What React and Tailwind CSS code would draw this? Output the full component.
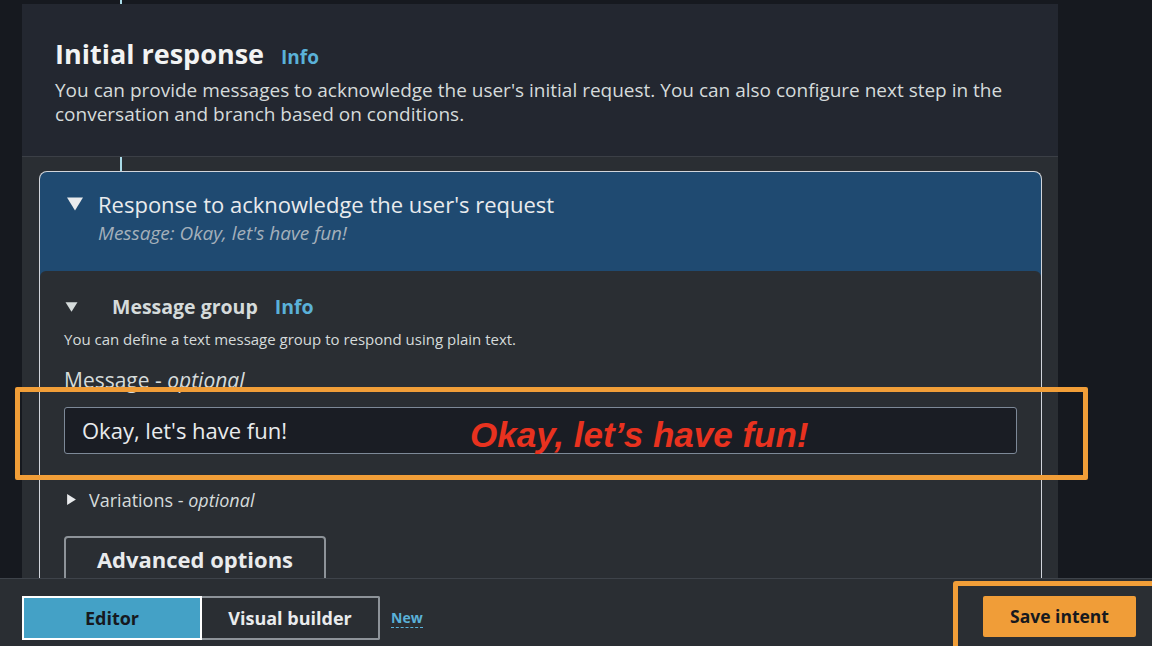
import React from "react";

const Caret = ({ dir = "down", className = "" }) => (
  <svg viewBox="0 0 10 10" className={className} fill="currentColor">
    {dir === "down" ? <polygon points="0,1 10,1 5,9" /> : <polygon points="1,0 9,5 1,10" />}
  </svg>
);

const App = () => {
  return (
    <div className="relative flex h-[646px] w-[1152px] flex-col overflow-hidden bg-[#16191f] font-['Open_Sans',sans-serif] text-[#e9ebed]">
      {/* main scrolling area */}
      <div className="flex-1 overflow-hidden">
        <div className="h-[4px] pl-[120px]">
          <div className="h-full w-[2px] bg-[#a9dbe8]" />
        </div>
        <div className="ml-[22px] w-[1036px]">
          {/* header */}
          <div className="border-b border-[#3b3f46] bg-[#232730] pb-[30px] pl-[33px] pr-[40px] pt-[34px]">
            <div className="flex items-baseline gap-[17px]">
              <h1 className="text-[27px] font-bold leading-[32px] text-[#f2f3f3]">Initial response</h1>
              <span className="text-[19px] font-bold text-[#5ab1d8]">Info</span>
            </div>
            <p className="mt-[6px] text-[19px] leading-[24px] text-[#d5dbdb]">
              You can provide messages to acknowledge the user's initial request. You can also configure next step in the
              conversation and branch based on conditions.
            </p>
          </div>

          {/* lower body */}
          <div className="bg-[#2a2e33] pb-[40px]">
            <div className="h-[14px] pl-[98px]">
              <div className="h-full w-[2px] bg-[#a9dbe8]" />
            </div>
            <div className="ml-[17px] mr-[16px] rounded-t-[8px] border border-b-0 border-[#d1d5db] bg-[#1f4a71]">
              <div className="h-[99px] pl-[27px] pt-[18px]">
                <div className="flex items-center gap-[15px]">
                  <Caret className="h-[16px] w-[16px] text-[#e9ebed]" />
                  <span className="text-[22px] leading-[28px] text-[#e9ebed]">
                    Response to acknowledge the user's request
                  </span>
                </div>
                <div className="mt-[4px] pl-[31px] text-[19px] italic leading-[22px] text-[#a4b0bb]">
                  Message: Okay, let's have fun!
                </div>
              </div>

              <div className="rounded-t-[6px] bg-[#2a2e33] pb-[40px] pl-[24px] pr-[24px] pt-[24px]">
                <div className="flex items-center">
                  <Caret className="ml-[1px] h-[12px] w-[13px] text-[#d5dbdb]" />
                  <span className="ml-[34px] text-[19.5px] font-bold leading-[24px] text-[#d5dbdb]">Message group</span>
                  <span className="ml-[17px] text-[19.5px] font-bold leading-[24px] text-[#5ab1d8]">Info</span>
                </div>
                <p className="mt-[10px] text-[15px] leading-[20px] text-[#d5dbdb]">
                  You can define a text message group to respond using plain text.
                </p>
                <div className="mt-[19px] text-[21px] leading-[24px] text-[#d5dbdb]">
                  Message - <span className="italic">optional</span>
                </div>
                <div className="mt-[15px] flex h-[47px] items-center rounded-[3px] border border-[#7d8998] bg-[#1a1d24] pl-[17px] text-[22px] text-[#e9ebed]">
                  Okay, let's have fun!
                </div>
                <div className="mt-[35px] flex items-center gap-[12px]">
                  <Caret dir="right" className="ml-[2px] h-[13px] w-[11px] text-[#e9ebed]" />
                  <span className="text-[18px] leading-[22px] text-[#d5dbdb]">
                    Variations - <span className="italic">optional</span>
                  </span>
                </div>
                <button className="mt-[25px] h-[48px] w-[262px] rounded-[4px] border-2 border-[#8d9399] text-[22px] font-bold text-[#e9ebed]">
                  Advanced options
                </button>
              </div>
            </div>
          </div>
        </div>
      </div>

      {/* footer */}
      <div className="flex h-[68px] items-start justify-between border-t border-[#3e434a] bg-[#2a2e33] pl-[22px] pr-[16px] pt-[17px]">
        <div className="flex items-center">
          <button className="h-[44px] w-[180px] border-2 border-white bg-[#44a1c6] text-[18px] font-bold text-[#16191f]">
            Editor
          </button>
          <button className="h-[44px] w-[178px] rounded-r-[2px] border-2 border-l-0 border-[#8d9399] text-[18px] font-bold text-[#e9ebed]">
            Visual builder
          </button>
          <span className="ml-[11px] border-b border-dashed border-[#5ab1d8] text-[14px] font-bold leading-[18px] text-[#5ab1d8]">
            New
          </span>
        </div>
        <button className="h-[41px] w-[153px] rounded-[2px] bg-[#f09d38] text-[17.5px] font-bold text-[#16191f]">
          Save intent
        </button>
      </div>

      {/* annotations */}
      <div className="pointer-events-none absolute left-[15px] top-[387px] h-[93px] w-[1073px] rounded-[2px] border-[5px] border-[#f19e38]" />
      <div className="pointer-events-none absolute left-[470px] top-[415px] font-['Liberation_Sans',sans-serif] text-[35px] font-bold italic leading-[40px] text-[#e8321f]">
        Okay, let’s have fun!
      </div>
      <div className="pointer-events-none absolute left-[953px] top-[581px] h-[90px] w-[230px] rounded-[3px] border-[5px] border-[#f19e38]" />
    </div>
  );
};

export default App;
